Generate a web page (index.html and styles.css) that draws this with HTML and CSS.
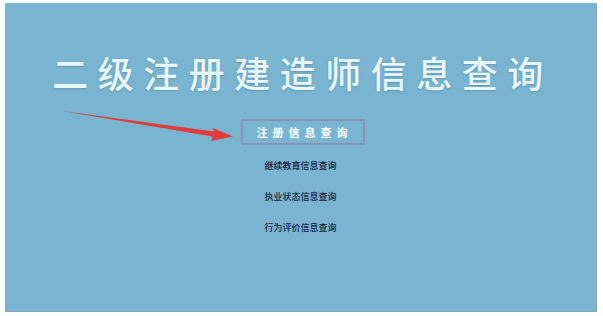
FILE: index.html
```html
<!DOCTYPE html>
<html lang="zh-CN">
  <head>
    <meta charset="UTF-8" />
    <meta name="viewport" content="width=device-width, initial-scale=1.0" />
    <title>二级注册建造师信息查询</title>
    <link rel="stylesheet" href="styles.css">
  </head>
  <body>
    <div class="panel">
      <h1 class="title">二级注册建造师信息查询</h1>

      <div class="menu">
        <a class="menu-main" href="#">注册信息查询</a>
        <a class="menu-item" href="#">继续教育信息查询</a>
        <a class="menu-item" href="#">执业状态信息查询</a>
        <a class="menu-item" href="#">行为评价信息查询</a>
      </div>

      <!-- annotation arrow pointing at the first entry -->
      <svg class="arrow" width="603" height="316" viewBox="0 0 603 316">
        <path d="M62 111 L214 131.5 L213 128 L233 136.5 L211 141 L212.5 136.5 Z" fill="#e23a3a" />
      </svg>
    </div>
  </body>
</html>
```

FILE: styles.css
```css
* {
  margin: 0;
  padding: 0;
  box-sizing: border-box;
}

body {
  background: #ffffff;
  font-family: "Noto Sans CJK SC", "Noto Sans", sans-serif;
}

.panel {
  position: relative;
  margin: 3px 6px 0 5px;
  height: 309px;
  background: #79b4d0;
  border-right: 1px solid #8aa9b4;
  border-bottom: 1px solid #8aa9b4;
  padding-top: 46px;
}

.title {
  text-align: center;
  font-size: 36px;
  line-height: 46px;
  font-weight: 500;
  letter-spacing: 9.5px;
  padding-left: 4px;
  color: #e6f6fa;
  text-shadow: 0 1px 2px rgba(60, 100, 120, 0.35);
}

.menu {
  display: flex;
  flex-direction: column;
  align-items: center;
  margin-top: 24px;
}

.menu-main {
  display: block;
  margin-left: 4px;
  border: 2px solid #8d8fb1;
  padding: 3px 10px 3px 14px;
  font-size: 11px;
  line-height: 16px;
  font-weight: bold;
  letter-spacing: 5px;
  color: #ffffff;
  text-decoration: none;
}

.menu-item {
  display: block;
  margin-top: 13px;
  font-size: 9px;
  line-height: 18px;
  font-weight: 500;
  color: #16243a;
  text-decoration: none;
}

.menu-main + .menu-item {
  margin-top: 12px;
}

.arrow {
  position: absolute;
  left: -5px;
  top: -3px;
  pointer-events: none;
}
```
